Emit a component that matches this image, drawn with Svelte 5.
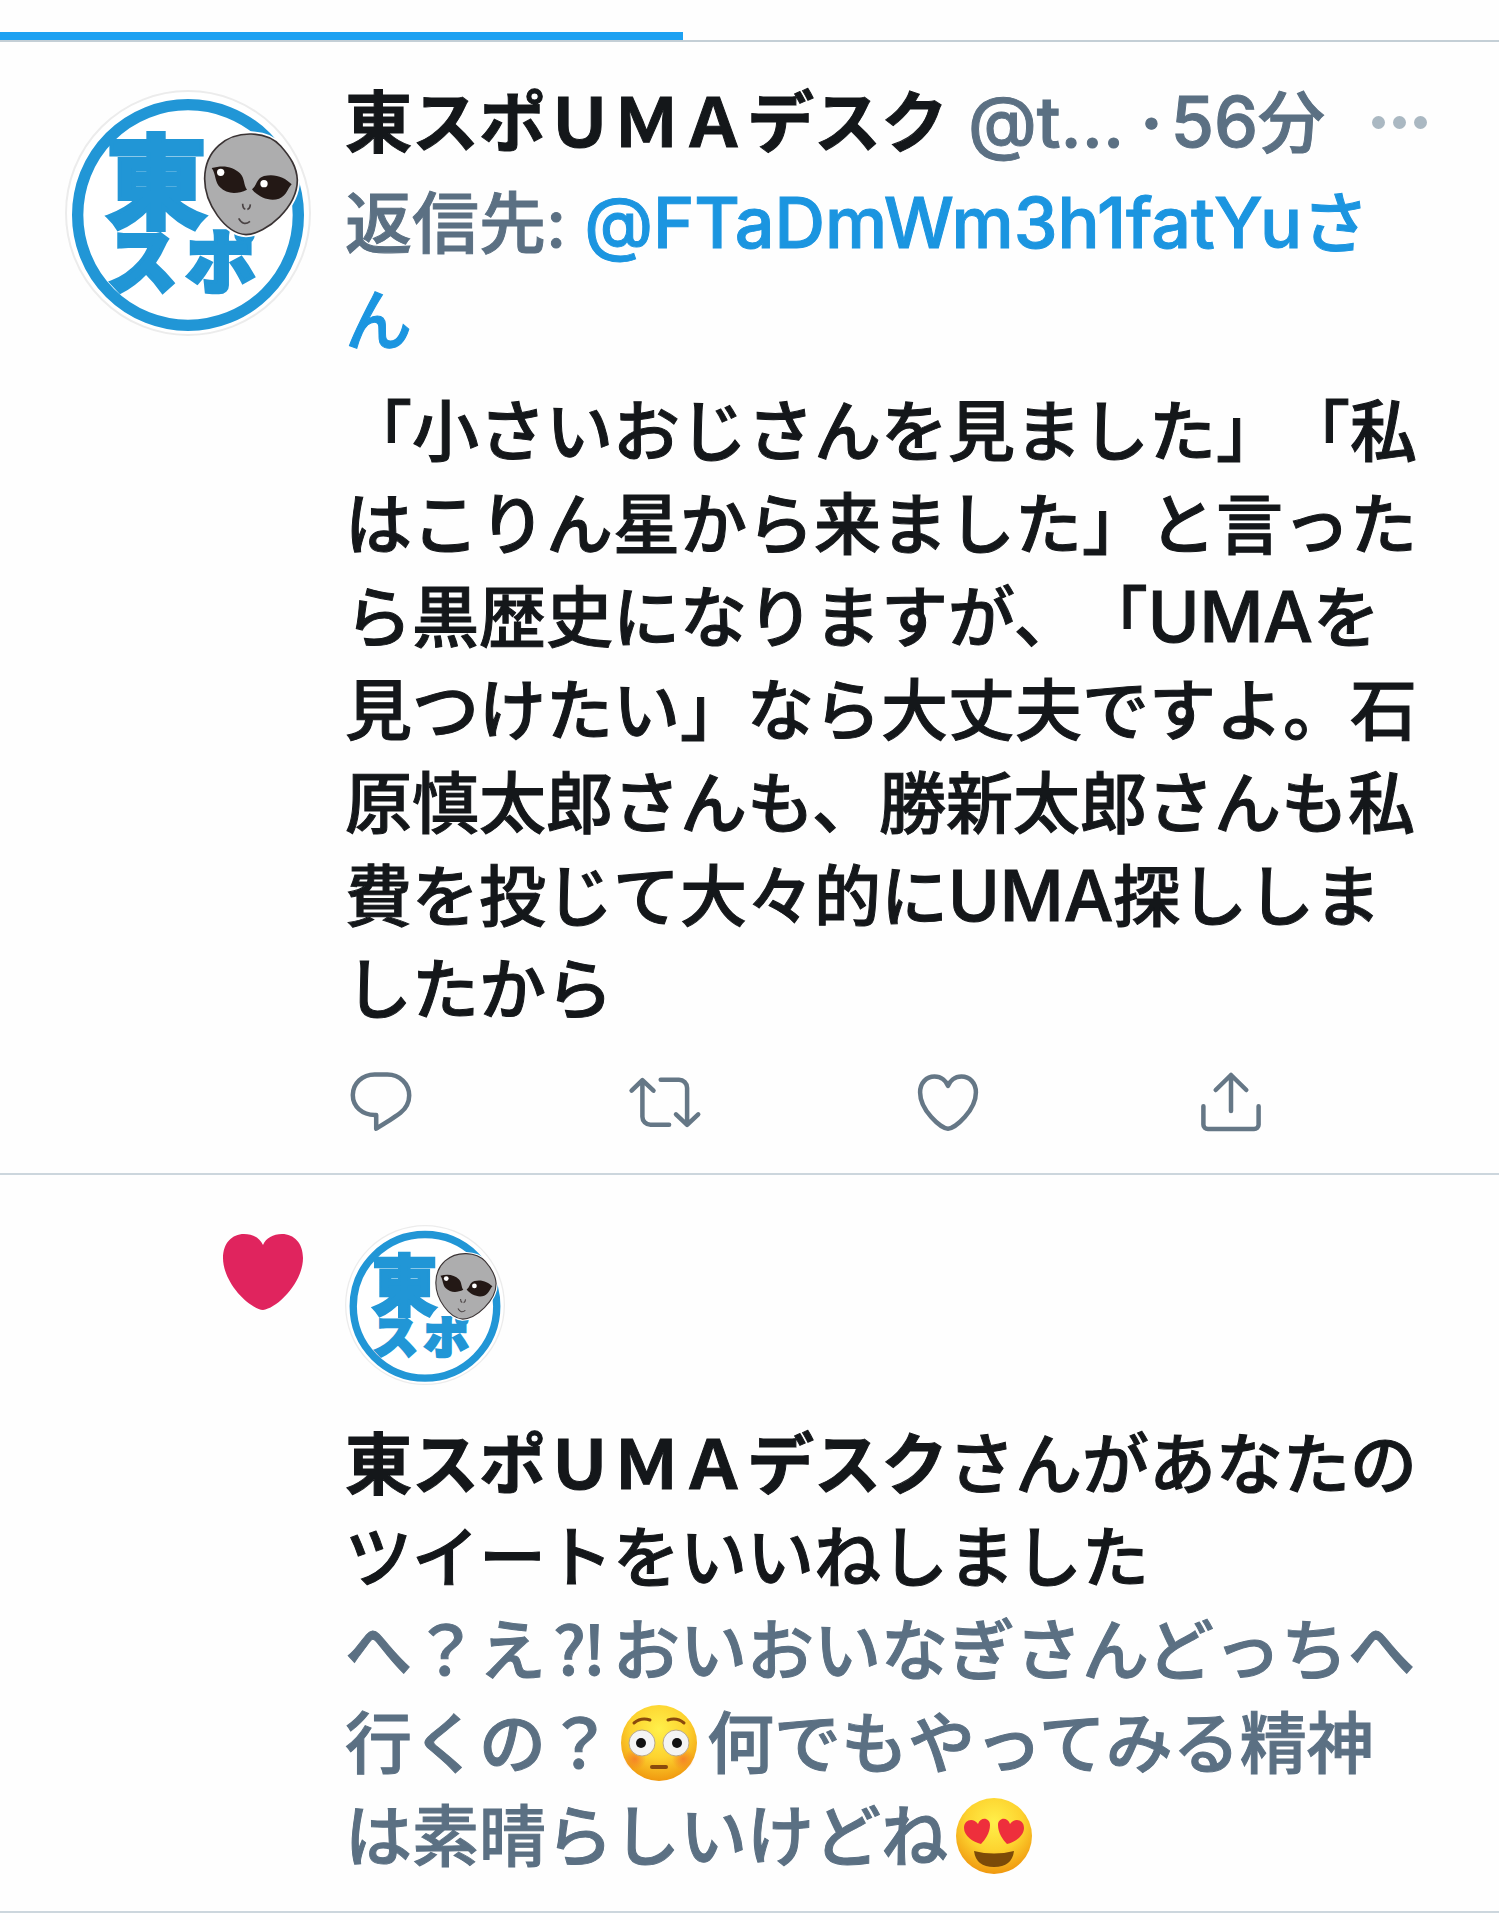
<script>
  const name = '東スポＵＭＡデスク';
  const actions = [
    { id: 'reply', label: '返信' },
    { id: 'retweet', label: 'リツイート' },
    { id: 'like', label: 'いいね' },
    { id: 'share', label: '共有' }
  ];
</script>

{#snippet avatar()}
  <svg class="avatar" viewBox="75 60 738 738" role="img" aria-label="東スポ">
    <circle cx="444" cy="429" r="366" fill="#fff" stroke="#ececec" stroke-width="6" />
    <circle cx="444" cy="435" r="331" fill="none" stroke="#2196d6" stroke-width="34" />
    <g class="logo-text">
      <text x="198" y="450" font-size="302">東</text>
      <text x="202" y="654" font-size="210">ス</text>
      <text x="438" y="654" font-size="210">ポ</text>
    </g>
    <path
      d="M634 192C560 190 495 240 494 325C493 400 555 490 618 494C680 492 772 410 772 330C770 290 752 262 722 228C700 204 665 193 634 192Z"
      fill="#adadae" stroke="#fff" stroke-width="16"
    />
    <path
      d="M634 192C560 190 495 240 494 325C493 400 555 490 618 494C680 492 772 410 772 330C770 290 752 262 722 228C700 204 665 193 634 192Z"
      fill="#adadae" stroke="#3a3334" stroke-width="5"
    />
    <path d="M515 294C550 284 580 290 600 310C615 325 610 345 621 359C590 374 560 372 540 352C524 336 528 312 515 294Z" fill="#231815" />
    <path d="M755 343C735 322 705 310 672 318C648 325 652 346 636 358C655 382 690 396 717 386C742 376 742 355 755 343Z" fill="#231815" />
    <circle cx="542" cy="307" r="11" fill="#fff" />
    <circle cx="672" cy="341" r="11" fill="#fff" />
    <path d="M608 401Q608 415 616 418M631 403Q630 416 622 418M596 445Q610 470 630 454" fill="none" stroke="#4a4344" stroke-width="5" />
  </svg>
{/snippet}

{#snippet icon(id)}
  <svg class="icon" viewBox="0 0 24 24" aria-hidden="true">
    {#if id === 'reply'}
      <path d="M9.900 2.800h4.200c4.100 0 7.300 3.100 7.300 7 0 2.300-1.100 4.300-2.900 5.800-1.600 1.300-5.200 3.500-8.100 5.300v-4.600h-.5c-4.100 0-7.300-2.700-7.300-6.600 0-3.900 3.200-6.900 7.300-6.900z" />
    {:else if id === 'retweet'}
      <path d="M1.200 8.200 4.800 4.700l3.700 3.500M4.800 4.900v12a2.700 2.700 0 0 0 2.700 2.700h6.200M23.400 16.100l-3.700 3.500-3.700-3.500M19.700 19.400V7.300a2.700 2.700 0 0 0-2.700-2.700h-6.100" />
    {:else if id === 'like'}
      <path d="M12 20.900C9.500 20.700 2.700 14.700 2.700 8.800 2.700 5.600 4.800 3.500 7.500 3.500c2.400 0 3.900 1.600 4.500 3.100.6-1.500 2.100-3.100 4.500-3.100 2.700 0 4.800 2.100 4.800 5.300C21.300 14.700 14.500 20.700 12 20.900z" />
    {:else}
      <path d="M12 15V3M6.900 8 12 3l5.100 5M2.800 13.400v6.200c0 .9.700 1.400 1.500 1.400h15.400c.8 0 1.500-.5 1.500-1.400v-6.200" />
    {/if}
  </svg>
{/snippet}

<main>
  <div class="tabs"><div class="indicator"></div></div>

  <article class="tweet">
    {@render avatar()}
    <div class="content">
      <header>
        <strong>{name}</strong>
        <span class="handle latin">@t...</span>
        <span class="dot">·</span>
        <time><span class="latin">56</span>分</time>
        <button class="more" aria-label="もっと見る"><i></i><i></i><i></i></button>
      </header>
      <p class="replying">返信先: <a href="#user"><span class="latin">@FTaDmWm3h1fatYu</span>さん</a></p>
      <p class="text">「小さいおじさんを見ました」「私はこりん星から来ました」と言ったら黒歴史になりますが、「<span class="latin">UMA</span>を見つけたい」なら大丈夫ですよ。石原慎太郎さんも、勝新太郎さんも私費を投じて大々的に<span class="latin">UMA</span>探ししましたから</p>
      <div class="actions">
        {#each actions as a}
          <button aria-label={a.label}>{@render icon(a.id)}</button>
        {/each}
      </div>
    </div>
  </article>

  <article class="liked">
    <svg class="heart" viewBox="0 0 80 76" aria-hidden="true">
      <path d="M40 76C25 74 0 48 0 24C0 9 9 0 21 0C30 0 37 4 40 11C43 4 50 0 59 0C71 0 80 9 80 24C80 48 55 74 40 76Z" fill="#e0245e" />
    </svg>
    <div class="content">
      {@render avatar()}
      <p class="text"><strong>{name}</strong>さんがあなたのツイートをいいねしました</p>
      <p class="quote">
        へ？え<span class="wide">⁈</span>おいおいなぎさんどっちへ行くの？<svg class="emoji" viewBox="0 0 76 76" role="img" aria-label="😳">
          <defs>
            <radialGradient id="face" cx="50%" cy="32%" r="68%">
              <stop offset="0" stop-color="#fff04a" />
              <stop offset=".55" stop-color="#fdd32f" />
              <stop offset="1" stop-color="#f0980f" />
            </radialGradient>
            <radialGradient id="blush">
              <stop offset="0" stop-color="#f4622c" stop-opacity=".6" />
              <stop offset="1" stop-color="#f4622c" stop-opacity="0" />
            </radialGradient>
          </defs>
          <circle cx="38" cy="38" r="38" fill="url(#face)" />
          <circle cx="14" cy="54" r="11" fill="url(#blush)" />
          <circle cx="62" cy="54" r="11" fill="url(#blush)" />
          <circle cx="21" cy="38" r="13" fill="#f4f4f4" stroke="#b9a88a" stroke-width="1" />
          <circle cx="55" cy="38" r="13" fill="#f4f4f4" stroke="#b9a88a" stroke-width="1" />
          <circle cx="20" cy="38" r="5" fill="#111" />
          <circle cx="56" cy="38" r="5" fill="#111" />
          <path d="M13 18Q20 12 29 15M47 15Q56 12 63 18" fill="none" stroke="#8a4a0c" stroke-width="3" stroke-linecap="round" />
          <path d="M31 62H45" stroke="#8a4a0c" stroke-width="4" stroke-linecap="round" />
        </svg>何でもやってみる精神は素晴らしいけどね<svg class="emoji" viewBox="0 0 76 76" role="img" aria-label="😍">
          <circle cx="38" cy="38" r="38" fill="url(#face)" />
          <path d="M25 46C17 44 8 38 8 30C8 22 17 19 22 26C25 18 34 20 34 27C34 35 29 42 25 46Z" fill="#ee2f3c" />
          <path d="M51 46C47 42 42 35 42 27C42 20 51 18 54 26C59 19 68 22 68 30C68 38 59 44 51 46Z" fill="#ee2f3c" />
          <path d="M18 53Q38 58 58 53Q56 69 38 69Q20 69 18 53Z" fill="#7c4a08" />
        </svg>
      </p>
    </div>
  </article>
</main>

<style>
  :global(body) {
    margin: 0;
    background: #fefefe;
  }
  main {
    font-family: Inter, 'Noto Sans CJK JP', sans-serif;
    font-size: 67px;
    font-weight: 500;
    line-height: 93px;
    color: #14171a;
    text-spacing-trim: space-all;
    line-break: anywhere;
    -webkit-text-stroke: 1px;
    overflow: hidden;
  }
  p {
    margin: 0;
  }
  strong {
    font-weight: 700;
  }
  button {
    padding: 0;
    border: 0;
    background: none;
    color: inherit;
    cursor: pointer;
  }
  svg {
    display: block;
    flex: none;
  }
  .latin {
    font-size: 70px;
    line-height: 1;
  }
  .wide {
    display: inline-block;
    width: 1em;
    font-family: 'Noto Sans CJK JP', sans-serif;
    line-height: 1;
    text-align: center;
  }
  .tabs {
    padding-top: 32px;
    border-bottom: 2px solid #c4cfd6;
  }
  .indicator {
    width: 683px;
    height: 8px;
    background: #1da1f2;
  }
  .tweet,
  .liked {
    display: flex;
    border-bottom: 2px solid #ccd6dd;
  }
  .tweet {
    gap: 34px;
    padding: 32px 72px 35px 65px;
  }
  .tweet .avatar {
    width: 246px;
    height: 246px;
    margin-top: 16px;
  }
  .content {
    flex: 1;
    min-width: 0;
  }
  .logo-text {
    font-family: 'Noto Sans CJK JP', sans-serif;
    font-weight: 900;
    fill: #2196d6;
    stroke: #2196d6;
    stroke-width: 12px;
  }
  header {
    display: flex;
    align-items: baseline;
    white-space: nowrap;
    line-height: 97px;
    padding-bottom: 4px;
  }
  .handle,
  .dot,
  time,
  .replying,
  .quote {
    color: #5b7083;
  }
  .handle {
    margin-left: 20px;
  }
  .dot {
    margin: 0 8px 0 16px;
    font-weight: 700;
  }
  .more {
    display: flex;
    align-self: center;
    gap: 8px;
    margin-left: auto;
  }
  .more i {
    width: 13px;
    height: 13px;
    border-radius: 50%;
    background: #aab8c2;
  }
  .replying {
    line-height: 97px;
  }
  a {
    color: #1b95e0;
    text-decoration: none;
  }
  .tweet .text {
    margin-top: 16px;
  }
  .actions {
    display: flex;
    justify-content: space-between;
    padding-right: 160px;
    margin-top: 30px;
  }
  .icon {
    width: 72px;
    height: 72px;
    fill: none;
    stroke: #657786;
    stroke-width: 1.5;
    stroke-linecap: round;
    stroke-linejoin: round;
    overflow: visible;
  }
  .liked {
    gap: 42px;
    padding: 50px 72px 28px 223px;
  }
  .heart {
    width: 80px;
    height: 76px;
    margin-top: 9px;
  }
  .liked .avatar {
    width: 160px;
    height: 160px;
    margin-bottom: 33px;
  }
  .emoji {
    display: inline-block;
    width: 76px;
    height: 76px;
    margin: 0 10px 0 8px;
    vertical-align: -13px;
  }
</style>
